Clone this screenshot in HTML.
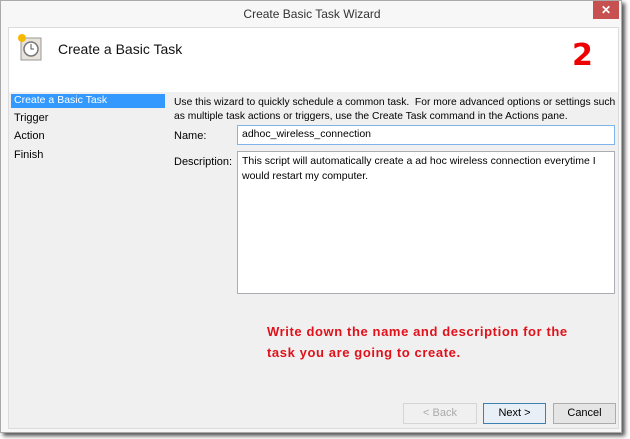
<!DOCTYPE html><html><head><style>
body{margin:0;width:630px;height:439px;background:#fff;position:relative;overflow:hidden;font-family:"Liberation Sans",sans-serif;font-size:11px;color:#000}
.win{position:absolute;left:0;top:0;width:622px;height:433px;background:#f7f7f7;border:1px solid #aaa;box-sizing:border-box;box-shadow:3px 3px 4px #555}
.title{position:absolute;left:0;width:622px;top:6px;text-align:center;font-size:12px;color:#333}
.close{position:absolute;left:592px;top:0;width:26px;height:18px;background:#c75050;color:#fff;text-align:center;font-size:12px;line-height:18px;font-weight:bold}
.inner{position:absolute;left:7px;top:26px;width:611px;height:402px;background:#f0f0f0;border:1px solid #dcdcdc;box-sizing:border-box}
.head{position:absolute;left:0;top:0;width:609px;height:64px;background:#fff}
.ht{position:absolute;left:49px;top:13px;font-size:14px;color:#111}
.two{position:absolute;left:563px;top:10px;font-size:30px;font-weight:bold;color:#e00;font-family:"DejaVu Sans",sans-serif}
.nav{position:absolute;left:2px;font-size:11px}
.sel{position:absolute;left:2px;top:66px;width:154px;height:14px;background:#3399ff;color:#fff;font-size:10.5px}
.box{position:absolute;background:#fff;border:1px solid #abadb3;box-sizing:border-box;padding:2px 4px;font-size:10.5px}
.btn{position:absolute;top:375px;height:21px;border:1px solid #acacac;background:#e5e5e5;box-sizing:border-box;text-align:center;line-height:19px;font-size:11px}
.red{position:absolute;left:258px;top:293px;color:#e0111a;font-weight:bold;font-size:13px;letter-spacing:0.6px;line-height:21px}
</style></head><body>
<div class="win">
<div class="title">Create Basic Task Wizard</div>
<div class="close">✕</div>
<div class="inner">
<div class="head">
<svg style="position:absolute;left:6px;top:4px" width="30" height="30"><rect x="6" y="6" width="20" height="22" fill="#e8e4dc" stroke="#999"/><circle cx="16" cy="17" r="7" fill="#fff" stroke="#777" stroke-width="1.5"/><path d="M16 12v5h3" stroke="#555" fill="none"/><circle cx="7" cy="6" r="4" fill="#f7b900"/></svg>
<div class="ht">Create a Basic Task</div>
<div class="two">2</div>
</div>
<div class="sel"><span style="padding-left:3px">Create a Basic Task</span></div>
<div class="nav" style="left:5px;top:84px">Trigger</div>
<div class="nav" style="left:5px;top:102px">Action</div>
<div class="nav" style="left:5px;top:121px">Finish</div>
<div style="position:absolute;left:165px;top:68px;line-height:14px;width:450px;font-size:10.3px">Use this wizard to quickly schedule a common task.&nbsp; For more advanced options or settings such as multiple task actions or triggers, use the Create Task command in the Actions pane.</div>
<div style="position:absolute;left:165px;top:102px">Name:</div>
<div class="box" style="left:228px;top:97px;width:378px;height:20px;border-color:#7eb4ea">adhoc_wireless_connection</div>
<div style="position:absolute;left:165px;top:128px">Description:</div>
<div class="box" style="left:228px;top:123px;width:378px;height:143px;line-height:15px">This script will automatically create a ad hoc wireless connection everytime I would restart my computer.</div>
<div class="red">Write down the name and description for the<br>task you are going to create.</div>
<div class="btn" style="left:394px;width:74px;color:#aaa;border-color:#d5d5d5;background:#f0f0f0">&lt; Back</div>
<div class="btn" style="left:474px;width:63px;border-color:#3c7fb1;background:#e9eff6">Next &gt;</div>
<div class="btn" style="left:544px;width:63px">Cancel</div>
</div>
</div>
</body></html>
